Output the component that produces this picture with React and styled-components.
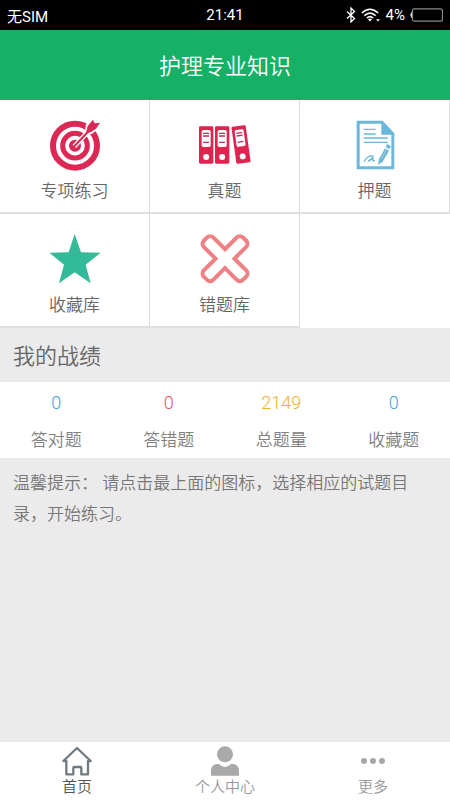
import React, { useState } from 'react';
import styled, { createGlobalStyle } from 'styled-components';

const GlobalStyle = createGlobalStyle`
  * {
    box-sizing: border-box;
  }

  body {
    margin: 0;
    background: #ebebeb;
    color: #666;
    font-family: Roboto, 'Noto Sans CJK SC', sans-serif;
    font-weight: 350;
  }

  button {
    font: inherit;
    color: inherit;
    background: none;
    border: none;
    padding: 0;
    cursor: pointer;
  }
`;

const Page = styled.div`
  display: flex;
  flex-direction: column;
  min-height: 100vh;
`;

const StatusBar = styled.div`
  display: grid;
  grid-template-columns: 1fr auto 1fr;
  align-items: center;
  height: 30px;
  padding: 0 7px;
  background: #000;
  color: #fff;
  font-size: 15px;
  font-weight: 400;
`;

const StatusIcons = styled.div`
  display: flex;
  align-items: center;
  justify-content: flex-end;
  gap: 5px;
`;

const Header = styled.header`
  display: flex;
  align-items: center;
  justify-content: center;
  height: 70px;
  padding-top: 4px;
  background: #16b067;
  color: #fff;
`;

const Title = styled.h1`
  margin: 0;
  font-size: 22px;
  line-height: 32px;
  font-weight: 350;
`;

const Menu = styled.nav`
  display: grid;
  grid-template-columns: repeat(3, 1fr);
  background: #fff;
`;

const MenuItem = styled.button`
  && {
    display: flex;
    flex-direction: column;
    align-items: center;
    gap: 6px;
    padding: 17px 0 9px;
    border-right: 1px solid #dcdcdc;
    border-bottom: 2px solid #e0e0e0;
    font-size: 17px;
    line-height: 24px;
  }
`;

const SectionTitle = styled.h2`
  margin: 0;
  padding: 13px 13px 9px;
  font-size: 22px;
  line-height: 32px;
  font-weight: 350;
`;

const Stats = styled.dl`
  display: grid;
  grid-template-columns: repeat(4, 1fr);
  margin: 0;
  padding: 8px 0 6px;
  background: #fff;
`;

const Stat = styled.div`
  display: flex;
  flex-direction: column-reverse;
  align-items: center;
  gap: 12px;
`;

const StatLabel = styled.dt`
  color: #808080;
  font-size: 17px;
  line-height: 24px;
`;

const StatValue = styled.dd`
  margin: 0;
  color: ${(props) => props.$color};
  font-size: 18px;
  line-height: 26px;
`;

const Tip = styled.p`
  flex: 1;
  margin: 0;
  padding: 10px 26px 10px 13px;
  color: #777;
  font-size: 17px;
  line-height: 31px;
`;

const TabBar = styled.nav`
  display: grid;
  grid-template-columns: repeat(3, 1fr);
  height: 58px;
  padding: 4px 3px 0;
  background: #fff;
`;

const Tab = styled.button`
  && {
    display: flex;
    flex-direction: column;
    align-items: center;
    color: ${(props) => (props.$active ? '#555' : '#999')};
    font-size: 15px;
    line-height: 22px;
  }
`;

const BluetoothIcon = () => (
  <svg width="10" height="16" viewBox="0 0 10 16" fill="none" stroke="#fff" strokeWidth="1.3">
    <path d="M1 4.5 L8.5 11.5 L5 15 V1 L8.5 4.5 L1 11.5" />
  </svg>
);

const WifiIcon = () => (
  <svg width="20" height="14" viewBox="0 0 20 14" fill="none" stroke="#fff" strokeWidth="1.5">
    <path d="M0.8 5 Q9 -2.6 17.2 5" />
    <path d="M3.4 7.6 Q9 2.6 14.6 7.6" />
    <path d="M5.8 10 Q9 7.2 12.2 10" />
    <path d="M7 11.2 Q9 9.8 11 11.2 L9 13.4 Z" fill="#fff" stroke="none" />
    <path d="M15 11.2 H19 L17 13.6 Z" fill="#fff" stroke="none" />
  </svg>
);

const BatteryIcon = () => (
  <svg width="33" height="14" viewBox="0 0 33 14" fill="none">
    <path d="M1.6 4.5 Q0 7 1.6 9.5 Z" fill="#ddd" stroke="#ddd" />
    <rect x="2.5" y="0.8" width="30" height="12.4" rx="1.8" stroke="#8a8a8a" strokeWidth="1.2" />
  </svg>
);

const TargetIcon = () => (
  <svg width="56" height="56" viewBox="0 0 168 168" fill="none">
    <circle cx="84" cy="86" r="66" stroke="#dc2855" strokeWidth="18" />
    <circle cx="84" cy="86" r="37" stroke="#dc2855" strokeWidth="15" />
    <circle cx="84" cy="86" r="18" fill="#dc2855" />
    <path
      d="M82 88 L128 39 M121 45 L123 27 L138 8 L143 18 L158 17 L146 34 L131 44 Z"
      stroke="#fff"
      strokeWidth="14"
    />
    <path d="M80 90 L128 39" stroke="#dc2855" strokeWidth="6" />
    <path d="M117 49 L122 27 L138 8 L143 19 L159 17 L147 35 L131 46 Z" fill="#dc2855" />
  </svg>
);

const Binder = () => (
  <>
    <rect width="43" height="112" rx="4" fill="#e02450" />
    <rect x="8" y="11" width="27" height="51" rx="5" fill="#fff" />
    <path d="M12 21 H30 M12 29 H30 M12 48 H30" stroke="#b83258" strokeWidth="4" />
    <circle cx="21.5" cy="92" r="9" fill="#fff" />
  </>
);

const BindersIcon = () => (
  <svg width="56" height="56" viewBox="0 0 168 168">
    <g transform="translate(6 28)">
      <Binder />
    </g>
    <g transform="translate(54 28)">
      <Binder />
    </g>
    <g transform="translate(103 30) rotate(-8)">
      <Binder />
    </g>
  </svg>
);

const PaperIcon = () => (
  <svg width="56" height="56" viewBox="0 0 168 168" fill="none">
    <path d="M29 11 H107 L142 49 V157 H29 Z" fill="#6cb8da" />
    <path d="M38 20 H103 V53 H133 V148 H38 Z" fill="#fff" />
    <path d="M50 37 H86 M50 51 H86 M50 63 H122 M50 76 H122" stroke="#6cb8da" strokeWidth="4" />
    <path d="M93 144 L96 126 L114 94 L126 101 L107 134 Z" fill="#6cb8da" />
    <path d="M116 90 L121 81 L132 88 L127 97 Z" fill="#6cb8da" />
    <path d="M103 124 L117 100" stroke="#b7ddee" strokeWidth="2" />
    <path
      d="M51 134 C58 120 70 114 78 117 C82 121 66 129 65 132 C70 132 74 123 78 125 C78 130 74 133 84 131"
      stroke="#6cb8da"
      strokeWidth="4"
    />
  </svg>
);

const StarIcon = () => (
  <svg width="56" height="56" viewBox="0 0 168 168">
    <path
      d="M83 9 L102 64 L161 65 L116 101 L131 157 L83 124 L36 157 L51 101 L7 65 L65 64 Z"
      fill="#33ba98"
    />
  </svg>
);

const CrossIcon = () => (
  <svg width="56" height="56" viewBox="0 0 168 168" fill="none">
    <path
      transform="translate(84 83) rotate(45)"
      d="M-20 -20 V-70 A13 13 0 0 1 -7 -83 H7 A13 13 0 0 1 20 -70 V-20 H70 A13 13 0 0 1 83 -7 V7 A13 13 0 0 1 70 20 H20 V70 A13 13 0 0 1 7 83 H-7 A13 13 0 0 1 -20 70 V20 H-70 A13 13 0 0 1 -83 7 V-7 A13 13 0 0 1 -70 -20 Z"
      stroke="#f08084"
      strokeWidth="12"
    />
  </svg>
);

const HomeIcon = () => (
  <svg width="30" height="30" viewBox="0 0 90 90" fill="none" stroke="#707b80" strokeWidth="7">
    <path
      d="M4 45 L45 6 L86 45 H78 V85 H58 V66 Q58 63 55 63 H37 Q34 63 34 66 V85 H13 V45 Z"
      strokeLinejoin="round"
    />
  </svg>
);

const PersonIcon = () => (
  <svg width="30" height="30" viewBox="0 0 90 90" fill="#a9a9a9">
    <circle cx="45" cy="25" r="24" />
    <path d="M3 89 V74 Q3 57 20 54 H27 Q45 72 63 54 H70 Q87 57 87 74 V89 Z" />
  </svg>
);

const MoreIcon = () => (
  <svg width="30" height="30" viewBox="0 0 90 90" fill="#a6a6a6">
    <circle cx="18" cy="45" r="9" />
    <circle cx="45" cy="45" r="9" />
    <circle cx="72" cy="45" r="9" />
  </svg>
);

const menuItems = [
  { label: '专项练习', Icon: TargetIcon },
  { label: '真题', Icon: BindersIcon },
  { label: '押题', Icon: PaperIcon },
  { label: '收藏库', Icon: StarIcon },
  { label: '错题库', Icon: CrossIcon }
];

const stats = [
  { label: '答对题', value: 0, color: '#4a9fd8' },
  { label: '答错题', value: 0, color: '#e05a64' },
  { label: '总题量', value: 2149, color: '#efb22c' },
  { label: '收藏题', value: 0, color: '#4a9fd8' }
];

const tabs = [
  { label: '首页', Icon: HomeIcon },
  { label: '个人中心', Icon: PersonIcon },
  { label: '更多', Icon: MoreIcon }
];

const App = () => {
  const [activeTab, setActiveTab] = useState('首页');

  return (
    <Page>
      <GlobalStyle />
      <StatusBar>
        <span>无SIM</span>
        <span>21:41</span>
        <StatusIcons>
          <BluetoothIcon />
          <WifiIcon />
          <span>4%</span>
          <BatteryIcon />
        </StatusIcons>
      </StatusBar>
      <Header>
        <Title>护理专业知识</Title>
      </Header>
      <Menu>
        {menuItems.map(({ label, Icon }) => (
          <MenuItem key={label} type="button">
            <Icon />
            {label}
          </MenuItem>
        ))}
      </Menu>
      <SectionTitle>我的战绩</SectionTitle>
      <Stats>
        {stats.map(({ label, value, color }) => (
          <Stat key={label}>
            <StatLabel>{label}</StatLabel>
            <StatValue $color={color}>{value}</StatValue>
          </Stat>
        ))}
      </Stats>
      <Tip>温馨提示： 请点击最上面的图标，选择相应的试题目录，开始练习。</Tip>
      <TabBar>
        {tabs.map(({ label, Icon }) => (
          <Tab
            key={label}
            type="button"
            $active={label === activeTab}
            onClick={() => setActiveTab(label)}
          >
            <Icon />
            {label}
          </Tab>
        ))}
      </TabBar>
    </Page>
  );
};

export default App;
